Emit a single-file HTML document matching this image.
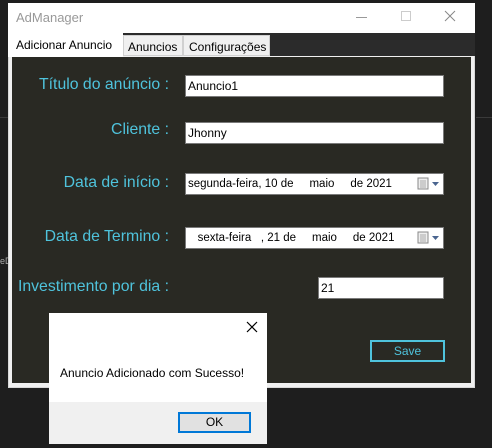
<!DOCTYPE html>
<html><head><meta charset="utf-8"><style>
*{margin:0;padding:0;box-sizing:border-box}
body{width:492px;height:448px;background:#1e1e1e;position:relative;overflow:hidden;font-family:"Liberation Sans",sans-serif}
.a{position:absolute}
.lbl{position:absolute;right:323px;color:#4fc3dc;font-size:15.8px;white-space:nowrap}
.tb{position:absolute;background:#fff;border:1px solid #7a7a7a;font-size:12px;color:#000;padding:3px 0 0 2px;height:22px;white-space:pre}
.dt{font-size:11.5px;padding-top:4px}
</style></head><body>
<div class="a" style="left:0;top:117px;width:8px;height:1px;background:#3a3a3a"></div>
<div class="a" style="left:476px;top:117px;width:16px;height:1px;background:#3a3a3a"></div>
<div class="a" style="left:0;top:256px;font-size:9px;color:#aaa">eD</div>
<div class="a" style="left:8px;top:3px;width:467px;height:385px;background:#f0f0f0;border:1px solid #d8d8d8"></div>
<div class="a" style="left:8px;top:3px;width:467px;height:30px;background:#fff"></div>
<div class="a" style="left:16px;top:10px;font-size:13px;color:#999">AdManager</div>
<div class="a" style="left:356px;top:17px;width:11px;height:1px;background:#999"></div>
<div class="a" style="left:401px;top:11px;width:10px;height:10px;border:1px solid #ccc"></div>
<svg class="a" style="left:444px;top:10px" width="12" height="12"><path d="M1 1L11 11M11 1L1 11" stroke="#888" stroke-width="1"/></svg>
<div class="a" style="left:8px;top:33px;width:467px;height:23px;background:#2b2b2b"></div>
<div class="a" style="left:8px;top:33px;width:115px;height:24px;background:#fff"></div>
<div class="a" style="left:16px;top:38px;font-size:12px;color:#000">Adicionar Anuncio</div>
<div class="a" style="left:123px;top:35px;width:60px;height:21px;background:#f0f0f0;border:1px solid #d0d0d0"></div>
<div class="a" style="left:128px;top:40px;font-size:12px;color:#000">Anuncios</div>
<div class="a" style="left:183px;top:35px;width:87px;height:21px;background:#f0f0f0;border:1px solid #d0d0d0"></div>
<div class="a" style="left:189px;top:40px;font-size:12px;color:#000">Configurações</div>
<div class="a" style="left:12px;top:57px;width:459px;height:326px;background:#292923"></div>
<div class="lbl" style="top:76px">Título do anúncio :</div>
<div class="tb" style="left:185px;top:75px;width:259px">Anuncio1</div>
<div class="lbl" style="top:121px">Cliente :</div>
<div class="tb" style="left:185px;top:122px;width:259px">Jhonny</div>
<div class="lbl" style="top:174px">Data de início :</div>
<div class="tb dt" style="left:185px;top:173px;width:259px">segunda-feira, 10 de     maio     de 2021</div>
<div class="lbl" style="top:228px">Data de Termino :</div>
<div class="tb dt" style="left:185px;top:227px;width:259px">   sexta-feira   , 21 de     maio     de 2021</div>
<svg class="a" style="left:417px;top:177px" width="26" height="14"><rect x="1" y="1" width="10" height="11" fill="#eee" stroke="#888"/><path d="M3 4h6M3 6h6M3 8h6M3 10h6" stroke="#aaa"/><path d="M15 5h7l-3.5 4z" fill="#4a6590"/></svg>
<svg class="a" style="left:417px;top:231px" width="26" height="14"><rect x="1" y="1" width="10" height="11" fill="#eee" stroke="#888"/><path d="M3 4h6M3 6h6M3 8h6M3 10h6" stroke="#aaa"/><path d="M15 5h7l-3.5 4z" fill="#4a6590"/></svg>
<div class="lbl" style="top:278px">Investimento por dia :</div>
<div class="tb" style="left:318px;top:277px;width:126px">21</div>
<div class="a" style="left:370px;top:340px;width:75px;height:22px;border:2px solid #4fc3dc;color:#4fc3dc;font-size:12px;text-align:center;line-height:18px">Save</div>
<div class="a" style="left:49px;top:313px;width:218px;height:131px;background:#fff"></div>
<div class="a" style="left:49px;top:402px;width:218px;height:42px;background:#f0f0f0"></div>
<svg class="a" style="left:246px;top:321px" width="12" height="12"><path d="M1 1L11 11M11 1L1 11" stroke="#000" stroke-width="1.2"/></svg>
<div class="a" style="left:60px;top:366px;font-size:12px;color:#000">Anuncio Adicionado com Sucesso!</div>
<div class="a" style="left:178px;top:412px;width:73px;height:21px;background:#e1e1e1;border:2px solid #0078d7;font-size:12px;text-align:center;line-height:17px">OK</div>
</body></html>
